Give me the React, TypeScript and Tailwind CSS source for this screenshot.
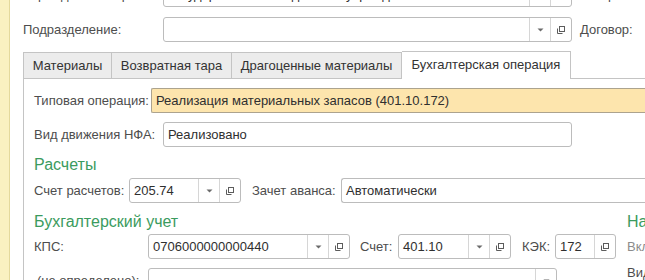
import React from "react";

function DropIcon() {
  return (
    <svg width="7" height="4" viewBox="0 0 7 4">
      <path d="M0.5 0.5h6L3.5 3.5z" fill="#6b6b6b" />
    </svg>
  );
}

function OpenIcon() {
  return (
    <svg width="10" height="10" viewBox="0 0 10 10" fill="none" stroke="#5c5c5c" strokeWidth="1">
      <rect x="3.5" y="1.5" width="5" height="5" />
      <path d="M1.5 3.5V8.5H6.5" />
    </svg>
  );
}

interface FieldProps {
  width?: string;
  text?: string;
  drop?: boolean;
  open?: boolean;
  grow?: boolean;
}

function Field({ width, text, drop, open, grow }: FieldProps) {
  return (
    <div
      className={
        "flex h-[25px] shrink-0 rounded-[3px] border border-[#bcbcbc] bg-white text-[#2f2f2f] " +
        (grow ? "flex-1 rounded-r-none border-r-0 " : "") +
        (width ?? "")
      }
    >
      <div className="flex min-w-0 flex-1 items-center overflow-hidden whitespace-nowrap px-[4px]">
        {text}
      </div>
      {drop && (
        <div className="flex w-[21px] items-center justify-center border-l border-[#d6d6d6]">
          <DropIcon />
        </div>
      )}
      {open && (
        <div className="flex w-[21px] items-center justify-center border-l border-[#d6d6d6]">
          <OpenIcon />
        </div>
      )}
    </div>
  );
}

export default function App() {
  return (
    <div className="flex h-[280px] w-[645px] overflow-hidden bg-white font-['Liberation_Sans',Arial,sans-serif] text-[13px] text-[#4d4d4d]">
      {/* боковая полоса */}
      <div className="w-[10px] shrink-0 border-r border-[#e4d99c] bg-[#faf1c1]" />

      <div className="min-w-0 flex-1 pl-[13px]">
        {/* Учреждение */}
        <div className="-mt-[18px] flex h-[25px] items-center whitespace-nowrap">
          <div className="w-[140px] shrink-0">Учреждение-отправитель:</div>
          <Field width="w-[409px]" text="Государственное бюджетное учреждение" drop open />
          <div className="ml-[8px]">Контрагент:</div>
        </div>

        {/* Подразделение */}
        <div className="mt-[10px] flex h-[25px] items-center whitespace-nowrap">
          <div className="w-[140px] shrink-0">Подразделение:</div>
          <Field width="w-[409px]" drop open />
          <div className="ml-[8px]">Договор:</div>
        </div>

        {/* Вкладки */}
        <div className="mt-[9px] flex h-[28px] items-end border-b border-[#c4c4c4] text-[#333]">
          <div className="flex h-[26px] w-[89px] items-center justify-center border border-b-0 border-[#c4c4c4] bg-[#ececec]">
            Материалы
          </div>
          <div className="flex h-[26px] w-[120px] items-center justify-center border-t border-r border-[#c4c4c4] bg-[#ececec]">
            Возвратная тара
          </div>
          <div className="flex h-[26px] w-[170px] items-center justify-center border-t border-r border-[#c4c4c4] bg-[#ececec]">
            Драгоценные материалы
          </div>
          <div className="-mb-px flex h-[28px] w-[169px] items-center justify-center border-t border-r border-[#c4c4c4] bg-white pb-[1px]">
            Бухгалтерская операция
          </div>
        </div>

        {/* Панель */}
        <div className="h-[300px] border-l border-[#c4c4c4] pl-[10px] pt-[9px]">
          <div className="flex h-[25px] items-center whitespace-nowrap">
            <div className="w-[117px] shrink-0">Типовая операция:</div>
            <div className="flex h-[25px] flex-1 items-center border border-r-0 border-[#aca38e] bg-[#fde5ad] px-[4px] text-[#2f2f2f] rounded-l-[2px]">
              Реализация материальных запасов (401.10.172)
            </div>
          </div>

          <div className="mt-[9px] flex h-[25px] items-center whitespace-nowrap">
            <div className="w-[129px] shrink-0">Вид движения НФА:</div>
            <Field width="w-[409px]" text="Реализовано" />
          </div>

          <div className="mt-[8px] flex h-[20px] items-center text-[16px] text-[#3b9b5e]">Расчеты</div>

          <div className="mt-[3px] flex h-[25px] items-center whitespace-nowrap">
            <div className="w-[95px] shrink-0">Счет расчетов:</div>
            <Field width="w-[112px]" text="205.74" drop open />
            <div className="ml-[11px] w-[89px] shrink-0">Зачет аванса:</div>
            <Field text="Автоматически" grow />
          </div>

          <div className="mt-[9px] flex whitespace-nowrap">
            {/* Бухгалтерский учет */}
            <div className="w-[593px] shrink-0">
              <div className="flex h-[20px] items-center text-[16px] text-[#3b9b5e]">Бухгалтерский учет</div>
              <div className="mt-[2px] flex h-[25px] items-center">
                <div className="w-[114px] shrink-0">КПС:</div>
                <Field width="w-[202px]" text="0706000000000440" drop open />
                <div className="ml-[10px] w-[38px] shrink-0">Счет:</div>
                <Field width="w-[113px]" text="401.10" drop open />
                <div className="ml-[11px] w-[33px] shrink-0">КЭК:</div>
                <Field width="w-[61px]" text="172" open />
              </div>
              <div className="mt-[9px] flex h-[25px] items-center">
                <div className="w-[114px] shrink-0 pl-[3px]">(не определено):</div>
                <Field width="w-[409px]" drop />
              </div>
            </div>

            {/* Налоги */}
            <div className="ml-[0px] min-w-0 flex-1">
              <div className="flex h-[20px] items-center text-[16px] text-[#3b9b5e]">Налогообложение</div>
              <div className="mt-[5px] h-[18px] text-[#8c8c8c]">Включать НДС</div>
              <div className="mt-[8px] text-[#4d4d4d]">Вид ставки НДС:</div>
            </div>
          </div>
        </div>
      </div>
    </div>
  );
}
